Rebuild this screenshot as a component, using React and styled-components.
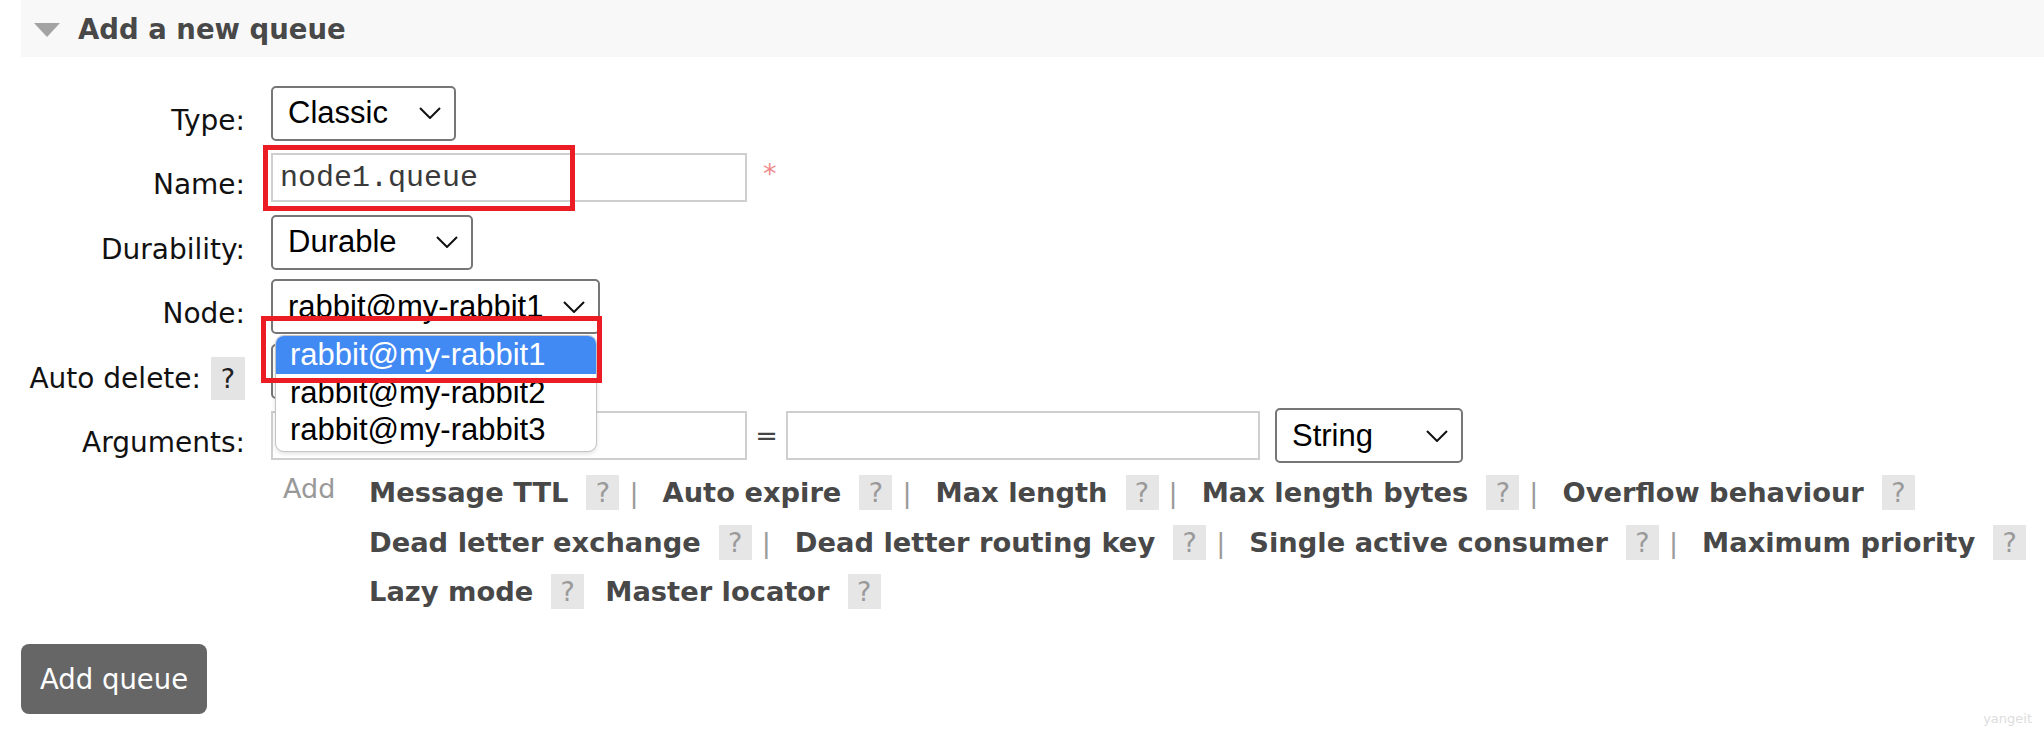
import styled, { createGlobalStyle } from "styled-components";

const GlobalStyle = createGlobalStyle`
  html, body {
    margin: 0;
    padding: 0;
    background: #fff;
  }
  body {
    font-family: "DejaVu Sans", Verdana, sans-serif;
    font-size: 27px;
    color: #111;
  }
`;

const helpRows = [
  { items: ["Message TTL", "Auto expire", "Max length", "Max length bytes", "Overflow behaviour"], sep: true },
  { items: ["Dead letter exchange", "Dead letter routing key", "Single active consumer", "Maximum priority"], sep: true },
  { items: ["Lazy mode", "Master locator"], sep: false },
];

const nodes = ["rabbit@my-rabbit1", "rabbit@my-rabbit2", "rabbit@my-rabbit3"];

function Chevron() {
  return (
    <svg width="22" height="12" viewBox="0 0 22 12" fill="none">
      <path d="M1 1 L11 11 L21 1" stroke="#111" strokeWidth="2" />
    </svg>
  );
}

function Select({ width, value }) {
  return (
    <SelectBox $w={width}>
      <span>{value}</span>
      <Chevron />
    </SelectBox>
  );
}

export default function App() {
  return (
    <Page>
      <GlobalStyle />
      <SectionHeader>
        <Caret />
        <Title>Add a new queue</Title>
      </SectionHeader>

      <Form>
        <FormRow>
          <Label>Type:</Label>
          <Field>
            <Select width={185} value="Classic" />
          </Field>
        </FormRow>
        <FormRow>
          <Label>Name:</Label>
          <Field>
            <Input $w={476} value="node1.queue" readOnly />
            <Required>*</Required>
            <Highlight $left={-8} $top={-8} $w={312} $h={66} />
          </Field>
        </FormRow>
        <FormRow>
          <Label>Durability:</Label>
          <Field>
            <Select width={202} value="Durable" />
          </Field>
        </FormRow>
        <FormRow>
          <Label>Node:</Label>
          <Field>
            <Select width={329} value="rabbit@my-rabbit1" />
            <Menu>
              {nodes.map((n, i) => (
                <MenuItem key={n} $active={i === 0}>{n}</MenuItem>
              ))}
            </Menu>
            <Highlight $left={-10} $top={37} $w={341} $h={67} />
          </Field>
        </FormRow>
        <FormRow>
          <Label>
            Auto delete:
            <LabelHelp>?</LabelHelp>
          </Label>
          <Field>
            {/* closed select, covered by the open node menu */}
            <Select width={140} value="" />
          </Field>
        </FormRow>
        <FormRow>
          <Label>Arguments:</Label>
          <Field>
            <Input $w={476} readOnly />
            <Equals>=</Equals>
            <Input $w={474} readOnly />
            <ArgType>
              <Select width={188} value="String" />
            </ArgType>
          </Field>
        </FormRow>
      </Form>

      <HelpArea>
        <AddLink>Add</AddLink>
        <HelpLines>
          {helpRows.map((row, r) => (
            <HelpLine key={r}>
              {row.items.map((item, i) => (
                <HelpItem key={item}>
                  <ArgLink>{item}</ArgLink>
                  <HelpBox>?</HelpBox>
                  {i < row.items.length - 1 && (row.sep ? <Sep>|</Sep> : <Spacer />)}
                </HelpItem>
              ))}
            </HelpLine>
          ))}
        </HelpLines>
      </HelpArea>

      <SubmitButton>Add queue</SubmitButton>
      <Watermark>yangeit</Watermark>
    </Page>
  );
}

const Page = styled.div`
  position: relative;
  width: 2044px;
  height: 734px;
  overflow: hidden;
  background: #fff;
`;

const SectionHeader = styled.div`
  margin-left: 21px;
  height: 57px;
  background: #f8f8f8;
  display: flex;
  align-items: center;
  padding-left: 13px;
`;

const Caret = styled.div`
  width: 0;
  height: 0;
  border-left: 13.5px solid transparent;
  border-right: 13.5px solid transparent;
  border-top: 14px solid #a3a3a3;
  margin-top: 3px;
`;

const Title = styled.h2`
  margin: 0 0 0 18px;
  font-size: 27.5px;
  font-weight: bold;
  color: #484848;
`;

const Form = styled.div`
  margin-top: 24px;
  display: flex;
  flex-direction: column;
`;

const FormRow = styled.div`
  height: 64.5px;
  display: flex;
  align-items: center;
`;

const Label = styled.div`
  width: 245px;
  padding-right: 2px;
  margin-top: 14px;
  display: flex;
  justify-content: flex-end;
  align-items: center;
  gap: 10px;
  color: #111;
  font-size: 28px;
  white-space: nowrap;
`;

const LabelHelp = styled.span`
  width: 34px;
  height: 43px;
  display: inline-flex;
  align-items: center;
  justify-content: center;
  background: #e4e4e4;
  color: #222;
  font-size: 27px;
`;

const Field = styled.div`
  position: relative;
  margin-left: 24px;
  display: flex;
  align-items: center;
`;

const SelectBox = styled.div`
  box-sizing: border-box;
  width: ${(p) => p.$w}px;
  height: 55px;
  border: 2px solid #767676;
  border-radius: 5px;
  background: #fff;
  padding: 0 13px 0 15px;
  display: flex;
  align-items: center;
  justify-content: space-between;
  font-family: "Liberation Sans", Arial, sans-serif;
  font-size: 31px;
  color: #000;
  white-space: nowrap;
`;

const Input = styled.input`
  box-sizing: border-box;
  width: ${(p) => p.$w}px;
  height: 49px;
  border: 2px solid #cfcfcf;
  padding: 0 7px;
  margin: 0;
  outline: none;
  font-family: "Liberation Mono", "Courier New", monospace;
  font-size: 30px;
  color: #3a3a3a;
  background: #fff;
`;

const Required = styled.span`
  margin-left: 16px;
  color: #f08a8a;
  font-size: 27px;
  margin-top: -8px;
`;

const Highlight = styled.div`
  position: absolute;
  left: ${(p) => p.$left}px;
  top: ${(p) => p.$top}px;
  width: ${(p) => p.$w}px;
  height: ${(p) => p.$h}px;
  box-sizing: border-box;
  border: 5px solid #ec1c24;
  z-index: 5;
  pointer-events: none;
`;

const Menu = styled.div`
  position: absolute;
  left: 4px;
  top: 56px;
  width: 322px;
  box-sizing: border-box;
  background: #fff;
  border: 1.5px solid #c4c4c4;
  border-radius: 9px;
  padding-bottom: 2px;
  overflow: hidden;
  z-index: 4;
  box-shadow: 0 2px 4px rgba(0, 0, 0, 0.12);
`;

const MenuItem = styled.div`
  height: 37.5px;
  line-height: 37.5px;
  padding-left: 14px;
  font-family: "Liberation Sans", Arial, sans-serif;
  font-size: 31px;
  color: ${(p) => (p.$active ? "#fff" : "#000")};
  background: ${(p) => (p.$active ? "#4189f3" : "transparent")};
`;

const Equals = styled.span`
  width: 39px;
  text-align: center;
  color: #444;
  font-size: 27px;
`;

const ArgType = styled.div`
  margin-left: 15px;
`;

const HelpArea = styled.div`
  display: flex;
  padding-left: 283px;
`;

const AddLink = styled.div`
  width: 86px;
  color: #999;
  font-size: 27px;
  line-height: 42px;
`;

const HelpLines = styled.div`
  display: flex;
  flex-direction: column;
`;

const HelpLine = styled.div`
  height: 49.5px;
  display: flex;
  align-items: center;
  white-space: nowrap;
`;

const HelpItem = styled.div`
  display: flex;
  align-items: center;
`;

const ArgLink = styled.span`
  font-weight: bold;
  color: #484848;
  font-size: 27.3px;
`;

const HelpBox = styled.span`
  margin-left: 18px;
  width: 33px;
  height: 35px;
  display: inline-flex;
  align-items: center;
  justify-content: center;
  background: #e6e6e6;
  color: #9a9a9a;
  font-size: 27px;
`;

const Sep = styled.span`
  margin: 0 24px 0 10px;
  color: #9a9a9a;
  font-size: 27px;
`;

const Spacer = styled.span`
  width: 21px;
`;

const SubmitButton = styled.button`
  margin: 27px 0 0 21px;
  height: 70px;
  padding: 0 19px;
  border: none;
  border-radius: 8px;
  background: #666;
  color: #fff;
  font-family: "DejaVu Sans", Verdana, sans-serif;
  font-size: 27.5px;
`;

const Watermark = styled.div`
  position: absolute;
  right: 12px;
  bottom: 8px;
  font-family: "DejaVu Sans", sans-serif;
  font-size: 13px;
  color: #ddd;
`;
